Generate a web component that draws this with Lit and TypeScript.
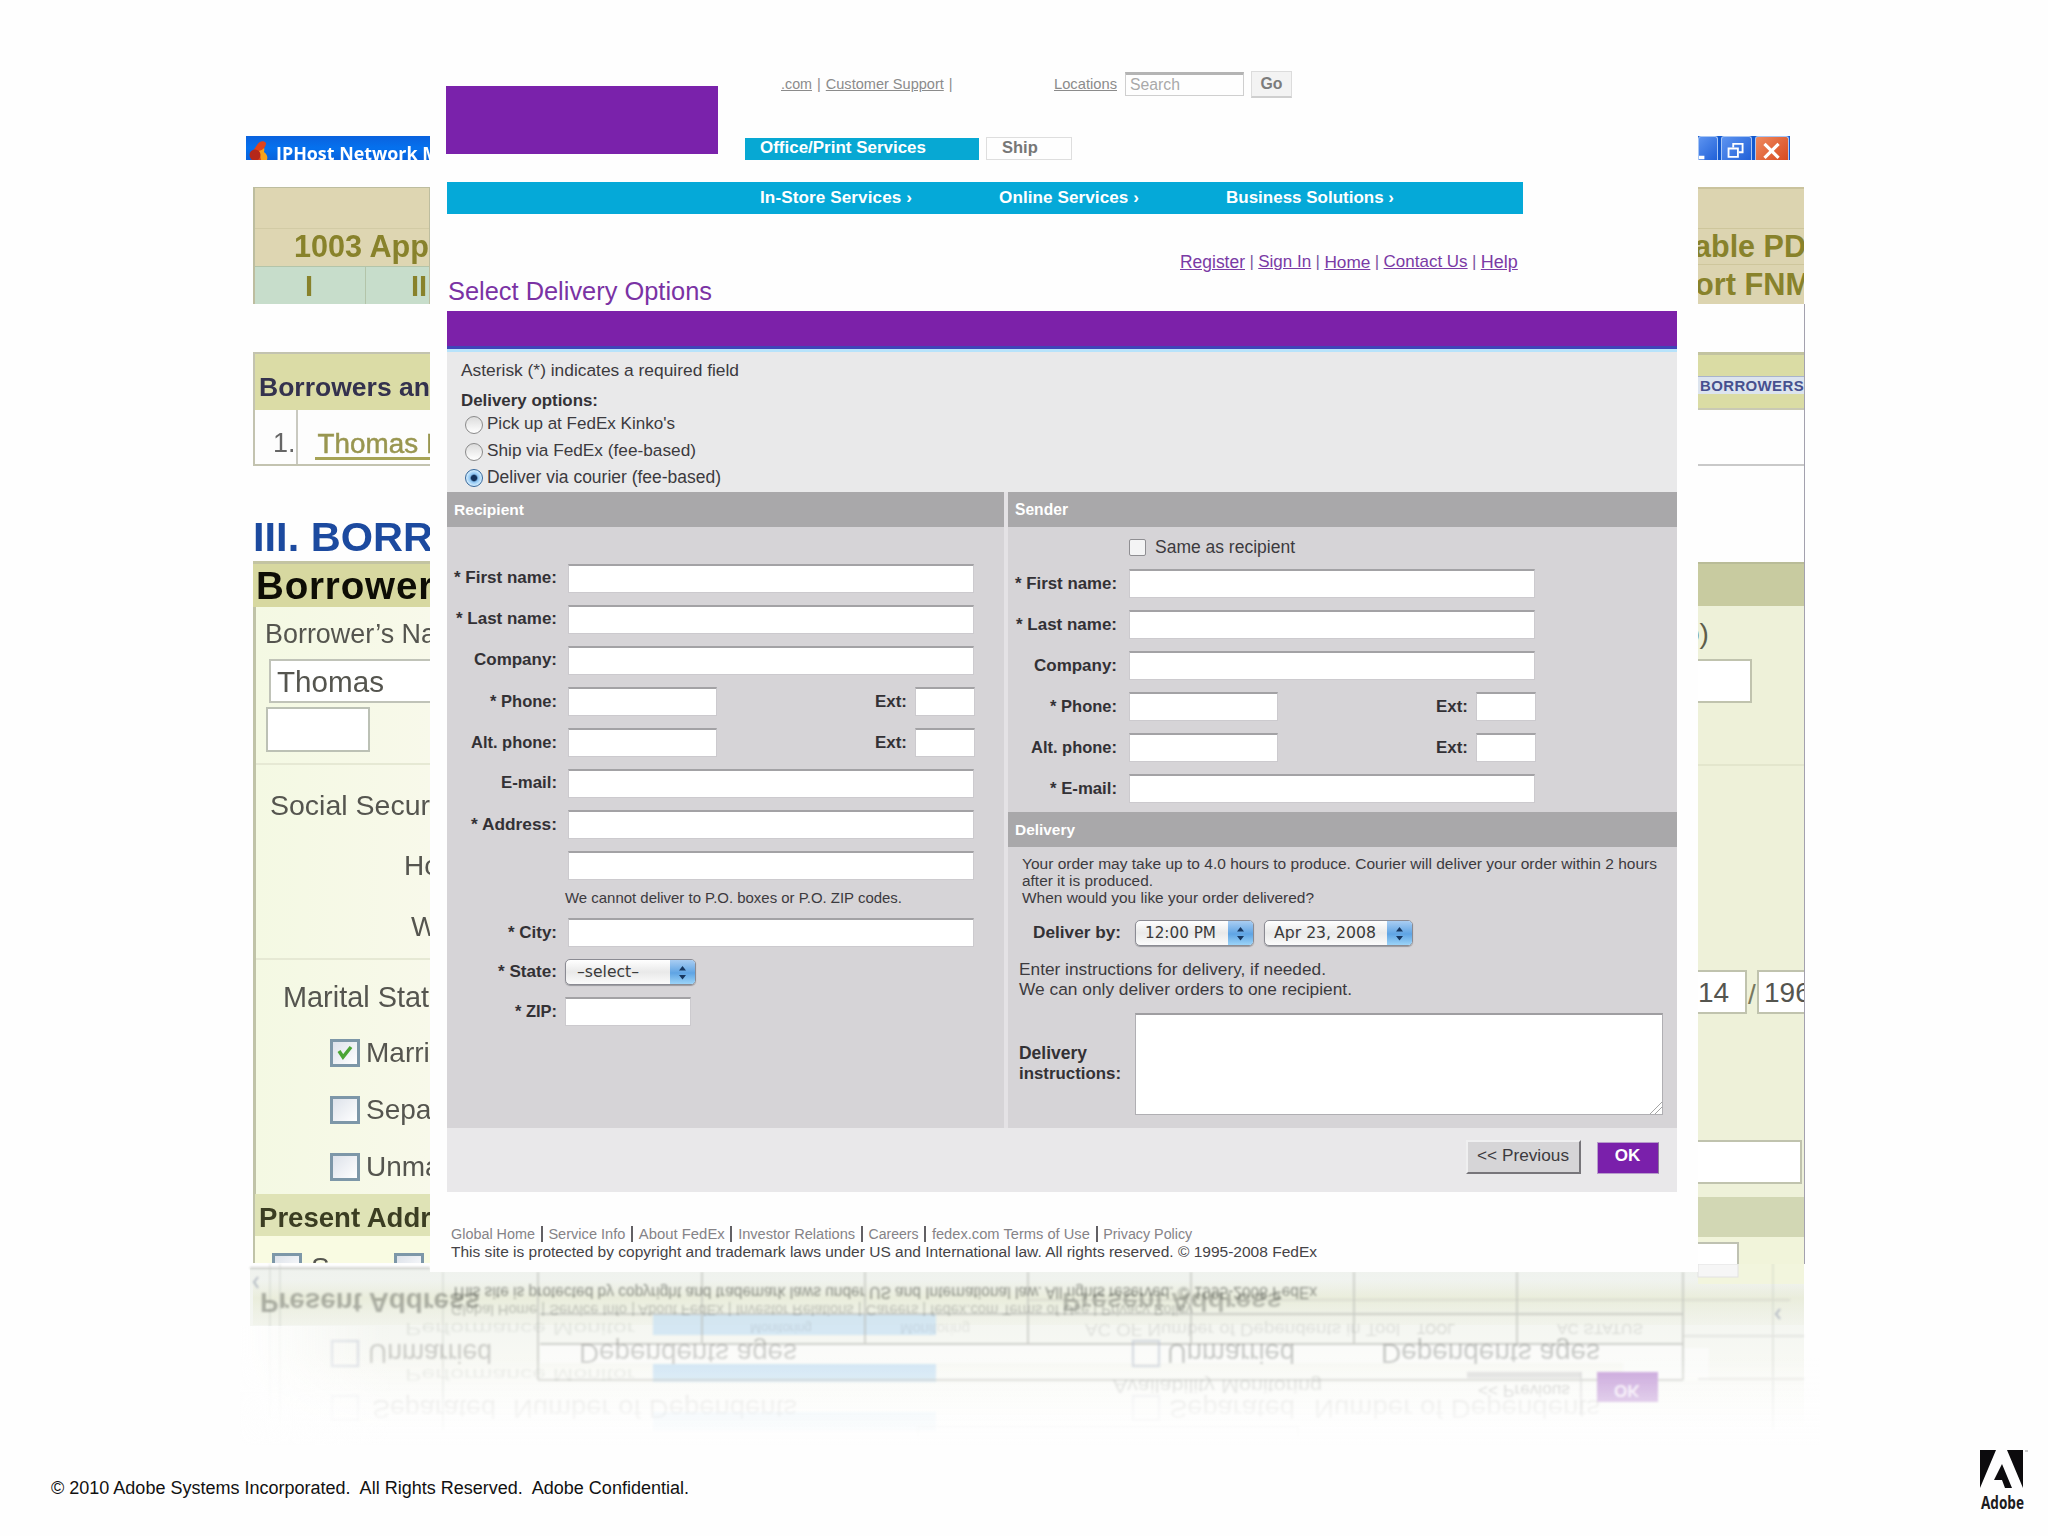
import { LitElement, html, css, svg, nothing } from "lit";
import { customElement, property } from "lit/decorators.js";

/* Text run whose size (within a few percent) and tracking are adjusted so that it spans a given width. */
@customElement("fit-text")
class FitText extends LitElement {
  @property({ type: Number }) w = 0;
  @property() text = "";
  static styles = css`
    :host { display: inline-block; white-space: pre; }
    :host(.u) span { text-decoration: underline; }
  `;
  render() {
    return html`<span>${this.text}</span>`;
  }
  updated() {
    const s = this.renderRoot.querySelector("span") as HTMLElement;
    s.style.letterSpacing = "0";
    const natural = s.getBoundingClientRect().width;
    if (!this.w || !natural) return;
    const base = parseFloat(getComputedStyle(this).fontSize);
    s.style.fontSize = `${base * Math.min(1.07, Math.max(0.94, this.w / natural))}px`;
    const scaled = s.getBoundingClientRect().width;
    s.style.letterSpacing = `${(this.w - scaled) / this.text.length}px`;
  }
}

const fit = (text: string, w: number) => html`<fit-text .text=${text} .w=${w}></fit-text>`;
const link = (text: string, w: number) => html`<fit-text class="u" .text=${text} .w=${w}></fit-text>`;

type Row = { label: string; w: number; kind: "full" | "phone" | "blank" };

const recipientRows: Row[] = [
  { label: "* First name:", w: 103, kind: "full" },
  { label: "* Last name:", w: 101, kind: "full" },
  { label: "Company:", w: 83, kind: "full" },
  { label: "* Phone:", w: 67, kind: "phone" },
  { label: "Alt. phone:", w: 86, kind: "phone" },
  { label: "E-mail:", w: 56, kind: "full" },
  { label: "* Address:", w: 86, kind: "full" },
  { label: "", w: 0, kind: "blank" },
];
const senderRows: Row[] = [
  { label: "* First name:", w: 102, kind: "full" },
  { label: "* Last name:", w: 101, kind: "full" },
  { label: "Company:", w: 83, kind: "full" },
  { label: "* Phone:", w: 67, kind: "phone" },
  { label: "Alt. phone:", w: 86, kind: "phone" },
  { label: "* E-mail:", w: 67, kind: "full" },
];

@customElement("delivery-window")
class DeliveryWindow extends LitElement {
  static styles = css`
    :host { display: block; box-sizing: border-box; background: #fefefe; padding: 0 0 0 16px;
      font: 16.5px "Liberation Sans", Arial, sans-serif; color: #3c3a3e; }
    * { box-sizing: border-box; }
    .head { display: flex; height: 122px; }
    .logo { width: 272px; height: 68px; margin-top: 26px; background: #7a22ab; }
    .tools { margin-left: 27px; flex: 1; }
    .util { display: flex; align-items: center; height: 28px; margin-top: 10px; padding-left: 36px;
      font-size: 14.5px; color: #8b8b8b; }
    .util .links { width: 273px; display: flex; gap: 5px; }
    .search { width: 119px; height: 24px; margin-left: 8px; border: 1px solid #cfcfcf; border-top: 3px solid #b4b4b4;
      padding-left: 4px; line-height: 19px; color: #a9a9a9; font-size: 15px; }
    .go { width: 41px; height: 27px; margin-left: 7px; background: #f3f3f3; border: 1px solid #dcdcdc;
      border-bottom: 2px solid #cfcfcf; text-align: center; line-height: 24px; font-weight: bold; font-size: 16px; color: #7c7c7c; }
    .tabs { display: flex; gap: 6px; height: 23px; margin-top: 39px; font-weight: bold; font-size: 16.5px; line-height: 20px; }
    .tab { height: 22px; width: 234px; margin-top: 1px; padding-left: 15px; background: #07a8d3; color: #fff; line-height: 18px; }
    .tab.off { height: 23px; width: 86px; margin-left: 1px; margin-top: 0; background: #fefefe; border: 1px solid #dedede; color: #777; }
    .nav { display: flex; height: 32px; width: 1076px; margin-left: 1px; background: #05a9d8; color: #fff; font-weight: bold;
      line-height: 32px; padding-left: 313px; font-size: 16px; }
    .nav div { width: 239px; }
    .nav div:nth-child(2) { width: 227px; }
    .quick { display: flex; height: 40px; margin-top: 28px; padding-left: 734px; line-height: 40px; gap: 4.400px; color: #7d55a0; font-size: 17px; }
    .quick .u { color: #7a3aa5; }
    .title { height: 28px; line-height: 30px; margin-top: -6px; padding-left: 2px; font-size: 25px; color: #7a32a4; }
    .bar { height: 38px; margin: 7px 21px 0 1px; background: #7c21a9; border-bottom: 3px solid #3f45b8; }
    .intro { height: 143px; margin: 0 21px 0 1px; background: #e9e9ea; border-top: 3px solid #b7e3fb; padding: 6px 14px 0; }
    .line { height: 24px; line-height: 24px; font-size: 17px; }
    .line.bold { font-weight: bold; margin-top: 8px; height: 20px; line-height: 21px; color: #343236; font-size: 16.5px; }
    .opt { display: flex; align-items: center; height: 26.7px; margin-left: 4px; font-size: 17px; }
    .opt fit-text { margin-top: -2px; }
    .opts { margin-top: 1.500px; }
    .radio { width: 18px; height: 18px; margin-right: 4px; border: 1.5px solid #8a8a8a; border-radius: 50%; background: linear-gradient(#dcdcdc, #fff); }
    .radio.on { border-color: #35679c; background: radial-gradient(circle, #14325c 0 2.6px, #8cc4f2 4px, #d6efff 8px); }
    .cols { display: flex; gap: 4px; margin: 0 21px 0 1px; height: 636px; background: #e4e2e5; }
    .col { background: #d6d4d7; height: 636px; }
    .left { width: 557px; }
    .right { flex: 1; }
    .sub { height: 35px; background: #a9a8aa; color: #fff; font-weight: bold; font-size: 15.5px; line-height: 35px; padding-left: 7px; }
    .field { display: flex; height: 29px; margin-bottom: 12px; align-items: center; color: #333135; font-weight: bold; }
    .field.state { height: 26px; }
    .lab { width: 110px; margin-right: 11px; text-align: right; flex: none; }
    .leftform .lab { margin-top: -1px; }
    .right .lab { width: 109px; margin-right: 12px; }
    .in { height: 29px; width: 406px; background: #fff; border: 1px solid #cccace; border-top: 2px solid #a3a2a5; flex: none; }
    .in.ph { width: 149px; }
    .in.ex { width: 60px; }
    .ext { width: 198px; padding-right: 8px; text-align: right; }
    .note { height: 39px; line-height: 38px; padding-left: 118px; font-size: 14.5px; margin-top: -12px; }
    .leftform { padding-top: 37px; height: 364px; }
    .sel { display: flex; height: 26px; border: 1px solid #8b8b93; border-radius: 5px; overflow: hidden; font: 15.5px "DejaVu Sans", "Noto Sans", sans-serif; color: #3a3a3a;
      background: linear-gradient(#fff, #e9e9e9 50%, #fbfbfb); line-height: 24px; box-shadow: 0 1px 1px #9a9a9e; font-weight: normal; padding-left: 11px; justify-content: space-between; }
    .sel svg { width: 25px; height: 26px; background: linear-gradient(#a9cdf2, #5fa4e4 50%, #a6dcfb); flex: none; }
    .s1 { width: 131px; margin-left: -3px; } .s2 { width: 119px; } .s3 { width: 149px; margin-left: 10px; }
    .s2, .s3 { padding-left: 9px; }
    .in.zip { width: 126px; margin-left: -3px; }
    .same { display: flex; height: 41px; margin-bottom: 1px; align-items: center; padding-left: 121px; font-size: 17px; gap: 9px; }
    .cb { width: 17px; height: 17px; border: 1.5px solid #8f8e92; border-radius: 2px; background: #f4f4f5; }
    .sform { height: 243px; }
    .para { font-size: 15.5px; line-height: 17px; padding: 8px 0 0 14px; height: 73px; }
    .para div, .para2 div { white-space: nowrap; }
    .by { display: flex; height: 25px; align-items: center; padding-left: 25px; font-weight: bold; }
    .by > fit-text { width: 102px; color: #333135; }
    .para2 { font-size: 17px; line-height: 19.5px; padding: 15px 0 0 11px; height: 68px; }
    .ins { display: flex; align-items: center; padding-left: 11px; font-weight: bold; line-height: 20px; color: #333135; }
    .ins .l { width: 116px; margin-top: -2px; }
    .ta { width: 528px; height: 102px; background: #fff; border: 1px solid #b0afb3; border-top: 2px solid #9f9ea1; display: flex; align-items: flex-end; justify-content: flex-end; }
    .foot { height: 64px; margin: 0 21px 0 1px; background: #e9e8ea; display: flex; justify-content: flex-end; padding: 12px 18.500px 0 0; gap: 16px; }
    .btn { width: 115px; height: 34px; background: #d6d5d7; border: 2px solid #efeff0; border-right-color: #77757a; border-bottom-color: #77757a; text-align: center; line-height: 27px; font-size: 17px; }
    .ok { width: 62px; height: 32px; margin-top: 2px; background: #7a20ab; color: #fff; border: 1px solid #b79ccb; border-right-color: #8b7a9a; text-align: center; line-height: 25px; font-weight: bold; font-size: 17px; }
    .legal { padding: 33px 0 0 5px; font-size: 14.5px; line-height: 18px; color: #858387; white-space: nowrap; }
    .legal .l1 { display: flex; gap: 5.700px; }
    .legal i { width: 2px; height: 16px; margin-top: 1px; background: #626064; }
    .legal .l2 { color: #454346; font-size: 15.5px; }
  `;

  row(r: Row) {
    return html`<div class="field">
      <div class="lab">${r.label ? fit(r.label, r.w) : nothing}</div>
      ${r.kind === "phone"
        ? html`<div class="in ph"></div><div class="ext">${fit("Ext:", 32)}</div><div class="in ex"></div>`
        : html`<div class="in"></div>`}
    </div>`;
  }
  arrows() {
    return html`<svg viewBox="0 0 25 26"><path d="M12.5 6l3.5 4.500h-7zM12.500 19.500l3.500-4.500h-7z" fill="#17365f" /></svg>`;
  }
  render() {
    const legal: [string, number][] = [["Global Home", 84], ["Service Info", 77], ["About FedEx", 86], ["Investor Relations", 117], ["Careers", 50], ["fedex.com Terms of Use", 158], ["Privacy Policy", 89]];
    const quick: [string, number][] = [["Register", 65], ["Sign In", 53], ["Home", 46], ["Contact Us", 84], ["Help", 37]];
    return html`
      <div class="head">
        <div class="logo"></div>
        <div class="tools">
          <div class="util">
            <div class="links">${link(".com", 31)}<span>|</span>${link("Customer Support", 118)}<span>|</span></div>
            ${link("Locations", 63)}
            <div class="search">${fit("Search", 50)}</div>
            <div class="go">${fit("Go", 22)}</div>
          </div>
          <div class="tabs">
            <div class="tab">${fit("Office/Print Services", 166)}</div>
            <div class="tab off">Ship</div>
          </div>
        </div>
      </div>
      <div class="nav">
        <div>${fit("In-Store Services ›", 152)}</div>
        <div>${fit("Online Services ›", 140)}</div>
        <div>${fit("Business Solutions ›", 168)}</div>
      </div>
      <div class="quick">${quick.map(([t, w], i) => html`${i ? html`<span>|</span>` : nothing}${link(t, w)}`)}</div>
      <div class="title">${fit("Select Delivery Options", 264)}</div>
      <div class="bar"></div>
      <div class="intro">
        <div class="line">${fit("Asterisk (*) indicates a required field", 278)}</div>
        <div class="line bold">${fit("Delivery options:", 137)}</div>
        <div class="opts">
          <div class="opt"><span class="radio"></span>${fit("Pick up at FedEx Kinko's", 188)}</div>
          <div class="opt"><span class="radio"></span>${fit("Ship via FedEx (fee-based)", 209)}</div>
          <div class="opt"><span class="radio on"></span>${fit("Deliver via courier (fee-based)", 234)}</div>
        </div>
      </div>
      <div class="cols">
        <div class="col left">
          <div class="sub">${fit("Recipient", 70)}</div>
          <div class="leftform">${recipientRows.map((r) => this.row(r))}</div>
          <div class="note">${fit("We cannot deliver to P.O. boxes or P.O. ZIP codes.", 337)}</div>
          <div class="field"><div class="lab">${fit("* City:", 49)}</div><div class="in"></div></div>
          <div class="field state"><div class="lab">${fit("* State:", 59)}</div><div class="sel s1">${fit("–select–", 62)}${this.arrows()}</div></div>
          <div class="field"><div class="lab">${fit("* ZIP:", 42)}</div><div class="in zip"></div></div>
        </div>
        <div class="col right">
          <div class="sub">${fit("Sender", 53)}</div>
          <div class="same"><span class="cb"></span>${fit("Same as recipient", 140)}</div>
          <div class="sform">${senderRows.map((r) => this.row(r))}</div>
          <div class="sub">${fit("Delivery", 60)}</div>
          <div class="para">
            <div>${fit("Your order may take up to 4.0 hours to produce. Courier will deliver your order within 2 hours", 635)}</div>
            <div>${fit("after it is produced.", 131)}</div>
            <div>${fit("When would you like your order delivered?", 292)}</div>
          </div>
          <div class="by">${fit("Deliver by:", 88)}<div class="sel s2">${fit("12:00 PM", 71)}${this.arrows()}</div><div class="sel s3">${fit("Apr 23, 2008", 102)}${this.arrows()}</div></div>
          <div class="para2">
            <div>${fit("Enter instructions for delivery, if needed.", 307)}</div>
            <div>${fit("We can only deliver orders to one recipient.", 333)}</div>
          </div>
          <div class="ins">
            <div class="l">${fit("Delivery", 68)}<br />${fit("instructions:", 102)}</div>
            <div class="ta"><svg width="13" height="13" viewBox="0 0 13 13" stroke="#a5a5a5" fill="none"><path d="M1 13L13 1M6 13L13 6" /></svg></div>
          </div>
        </div>
      </div>
      <div class="foot"><div class="btn">${fit("<< Previous", 92)}</div><div class="ok">OK</div></div>
      <div class="legal">
        <div class="l1">${legal.map(([t, w], i) => html`${i ? html`<i></i>` : nothing}${fit(t, w)}`)}</div>
        <div class="l2">${fit("This site is protected by copyright and trademark laws under US and International law. All rights reserved. © 1995-2008 FedEx", 866)}</div>
      </div>
    `;
  }
}

const paneBase = css`
  :host { display: block; overflow: hidden; font: 28px "Liberation Sans", Arial, sans-serif; color: #55554f; white-space: nowrap; }
  * { box-sizing: border-box; }
`;

@customElement("loan-pane-left")
class LoanPaneLeft extends LitElement {
  static styles = [paneBase, css`
    .tb { display: flex; height: 24px; background: linear-gradient(#0a62de, #0571ee 50%, #0762dd); color: #fff; overflow: hidden;
      font: bold 18px "Open Sans", "Noto Sans", sans-serif; line-height: 34px; gap: 7px; padding-left: 1px; }
    .tb svg { width: 22px; height: 24px; flex: none; }
    .body { margin-left: 7px; }
    .t1 { height: 117px; margin-top: 27px; border: 1px solid #bdbd9f; border-left-width: 2px; background: #ded6b2; font-weight: bold; color: #88822b; font-size: 29px; }
    .e { height: 41px; border-bottom: 1px solid #d2cba5; }
    .h { height: 37px; line-height: 34px; padding-left: 39px; }
    .g { display: flex; height: 38px; line-height: 38px; background: #c7ddcb; border-top: 1px solid #b3c4a9; }
    .g div:first-child { width: 111px; border-right: 1px solid #b3c4a9; padding-left: 50px; }
    .g div + div { padding-left: 45px; }
    .t2 { height: 114px; margin-top: 48px; border: 2px solid #c3c3b0; border-right: 0; background: #fdfdfd; }
    .bh { height: 56px; line-height: 67px; background: #dbdca6; font-weight: bold; font-size: 25px; color: #34324e; padding-left: 4px; }
    .br { display: flex; height: 54px; line-height: 67px; font-size: 27px; color: #666; }
    .br .n { width: 48px; padding-left: 18px; border-right: 2px solid #c9c9c0; }
    .br .a { height: 50px; margin-left: 17px; border-bottom: 3px solid #a6a356; color: #999650; -webkit-text-stroke: .5px #999650; font-size: 26px; flex: none; padding-left: 3px; }
    .iii { height: 95px; line-height: 141px; font-size: 43px; font-weight: bold; color: #1c4a9f; overflow: hidden; }
    .bw { height: 46px; line-height: 44px; background: #d7d8a0; border-top: 3px solid #c3c4a2; font-size: 36px; font-weight: bold; color: #0e0d05; padding-left: 3px; }
    .p { height: 587px; border-left: 3px solid #c0c3a8; background: linear-gradient(90deg, #f4f9e3, #f8f9ea); }
    .l { height: 40px; line-height: 41px; }
    .bn { height: 52px; line-height: 53px; padding-left: 9px; }
    .x { height: 44px; border: 2px solid #c0c3b8; background: #fff; line-height: 42px; margin-left: 13px; padding-left: 6px; border-right: 0; }
    .x2 { width: 104px; height: 45px; border: 2px solid #bcc1b5; background: #fff; margin: 4px 0 11px 10px; }
    .r { border-top: 2px solid #e6e9d4; }
    .so { height: 82px; line-height: 80px; padding-left: 14px; }
    .ho { padding-left: 148px; }
    .w { padding-left: 155px; margin: 21px 0 12px; }
    .ma { padding-left: 27px; margin: 17px 0 7px; }
    .c { display: flex; height: 57px; align-items: center; padding-left: 74px; gap: 6px; }
    .k { width: 30px; height: 28px; border: 3px solid #7d97a8; background: linear-gradient(135deg, #dde2ea, #fff); flex: none; display: flex; }
    .pr { height: 42px; line-height: 47px; background: #dfe3b6; color: #3b3d22; font-weight: bold; padding-left: 4px; border-left: 2px solid #c0c3a8; }
    .z { display: flex; height: 27px; background: #f9fbe2; padding: 17px 0 0 17px; border-left: 2px solid #c0c3a8; overflow: hidden; }
    .z .s { height: 10px; width: 92px; padding-left: 9px; line-height: 29px; overflow: hidden; }
  `];
  render() {
    const box = (on = false) => html`<span class="k">${on ? html`<svg viewBox="0 0 24 22"><path d="M6 9l4 6 8-10" fill="none" stroke="#4ba535" stroke-width="3.500" /></svg>` : nothing}</span>`;
    return html`
      <div class="tb"><svg viewBox="0 0 22 24"><path d="M13 8c4 0 5 5 4 8 3 2 4 5 3 8h-7l-2-10z" fill="#f6a21b" /><path d="M10 9c2-4 7-5 9-2 0 4-3 7-7 8l2 9H5l1-9z" fill="#e0431b" /><circle cx="8" cy="19" r="5.500" fill="#b5281a" /></svg>${fit("IPHost Network M", 163)}</div>
      <div class="body">
        <div class="t1"><div class="e"></div><div class="h">${fit("1003 App", 135)}</div><div class="g"><div>I</div><div>II</div></div></div>
        <div class="t2"><div class="bh">${fit("Borrowers an", 171)}</div><div class="br"><div class="n">1.</div><div class="a">${fit("Thomas L", 124)}</div></div></div>
        <div class="iii">${fit("III. BORR", 180)}</div>
        <div class="bw">${fit("Borrower", 178)}</div>
        <div class="p">
          <div class="bn">${fit("Borrower’s Na", 171)}</div>
          <div class="x">${fit("Thomas", 107)}</div>
          <div class="x2"></div>
          <div class="r so">${fit("Social Secur", 160)}</div>
          <div class="l ho">Ho</div>
          <div class="l w">W</div>
          <div class="r"></div>
          <div class="l ma">${fit("Marital Stat", 146)}</div>
          <div class="c">${box(true)}Marri</div>
          <div class="c">${box()}Sepa</div>
          <div class="c">${box()}Unma</div>
        </div>
        <div class="pr">${fit("Present Addr", 172)}</div>
        <div class="z">${box()}<span class="s">S</span>${box()}</div>
      </div>`;
  }
}

@customElement("loan-pane-right")
class LoanPaneRight extends LitElement {
  static styles = [paneBase, css`
    .tb { display: flex; height: 24px; width: 92px; background: #1258cf; overflow: hidden; gap: 3px; }
    .tb svg { height: 24px; display: block; border: 1px solid #a8c6f4; border-bottom: 0; border-radius: 3px 3px 0 0; background: linear-gradient(135deg, #5c93f0, #2161d8); box-sizing: border-box; }
    .tb .cl { background: linear-gradient(135deg, #ee8a60, #d84a1f); }
    .t { margin-top: 27px; width: 106px; height: 117px; background: #dcd4b0; border-top: 2px solid #cac39d; font-weight: bold; font-size: 29px; color: #88822b; overflow: hidden; }
    .e { height: 39px; }
    .a { height: 36px; line-height: 35px; border-top: 1px solid #cec69c; margin-left: -4px; }
    .o { height: 40px; line-height: 39px; border-top: 1px solid #cec69c; margin-left: -3px; }
    .frame { border-right: 1px solid #a3a1ae; height: 960px; background: #fefefe; width: 107px; }
    .gap { height: 48px; }
    .bh { height: 58px; background: #dadca4; border-top: 3px solid #c2c3a0; border-bottom: 2px solid #c9c9b4; padding-top: 21px; overflow: hidden; }
    .bo { height: 18px; background: #dce4ee; border-top: 1px solid #a9b4cc; font-size: 14px; line-height: 18px; color: #46508f; font-weight: bold; padding-left: 2px; }
    .w1 { height: 56px; border-bottom: 2px solid #c9c9c9; }
    .w2 { height: 96px; }
    .hd { height: 44px; background: #c8cba0; border-top: 2px solid #b9bc98; }
    .p { height: 591px; background: #eef1d9; }
    .n { height: 53px; line-height: 56px; color: #5e5e4c; margin-left: -14px; }
    .b { background: #fff; border: 2px solid #c0c3ae; border-left: 0; }
    .b1 { width: 54px; height: 44px; }
    .ln { margin-top: 61px; border-top: 2px solid #e3e6cd; height: 206px; }
    .d { display: flex; height: 44px; line-height: 42px; }
    .d .b { width: 49px; }
    .d i { width: 10px; font-style: normal; padding-left: 1px; color: #77785f; line-height: 49px; }
    .d .c { flex: 1; border: 2px solid #c0c3ae; border-right: 0; background: #fff; padding-left: 5px; overflow: hidden; }
    .b2 { width: 104px; height: 44px; margin-top: 126px; }
    .h2 { height: 40px; background: #d2d7b4; }
    .l { height: 28px; background: #f1f4da; padding-top: 5px; }
    .l .b { width: 41px; height: 30px; border-color: #bfc2b2; }
  `];
  render() {
    return html`
      <div class="tb">
        <svg width="20" viewBox="0 0 20 24"><path d="M0 22h6" stroke="#fff" stroke-width="4" /></svg>
        <svg width="31" viewBox="0 0 31 24" fill="none" stroke="#fff" stroke-width="2"><path d="M12 11V7h10v9h-4" /><path d="M7 12h10v9H7z" /></svg>
        <svg class="cl" width="34" viewBox="0 0 34 24"><path d="M9 7l15 15M24 7L9 22" stroke="#fff" stroke-width="3.4" /></svg>
      </div>
      <div class="t"><div class="e"></div><div class="a">${fit("able PD", 112)}</div><div class="o">${fit("ort FNM", 116)}</div></div>
      <div class="frame">
        <div class="gap"></div>
        <div class="bh"><div class="bo">${fit("BORROWERS", 104)}</div></div>
        <div class="w1"></div><div class="w2"></div>
        <div class="hd"></div>
        <div class="p">
          <div class="n">o)</div>
          <div class="b b1"></div>
          <div class="ln"></div>
          <div class="d"><div class="b">14</div><i>/</i><div class="c">196</div></div>
          <div class="b b2"></div>
        </div>
        <div class="h2"></div>
        <div class="l"><div class="b"></div></div>
      </div>`;
  }
}

type Ghost = { t: string; x: number; y: number; w: number; s: number; o: number; b?: boolean };
const ghosts: Ghost[] = [
  { t: "Present Address", x: 260, y: 1293, w: 220, s: 27, o: 0.34, b: true },
  { t: "Present Address", x: 1062, y: 1293, w: 220, s: 25, o: 0.28, b: true },
  { t: "This site is protected by copyright and trademark laws under US and International law. All rights reserved. © 1995-2008 FedEx", x: 451, y: 1287, w: 866, s: 16, o: 0.5 },
  { t: "Global Home | Service Info | About FedEx | Investor Relations | Careers | fedex.com Terms of Use | Privacy Policy", x: 451, y: 1305, w: 742, s: 14.5, o: 0.26 },
  { t: "Unmarried", x: 368, y: 1344, w: 124, s: 27, o: 0.22 },
  { t: "Dependents ages", x: 579, y: 1344, w: 218, s: 27, o: 0.22 },
  { t: "Unmarried", x: 1167, y: 1344, w: 128, s: 27, o: 0.25 },
  { t: "Dependents ages", x: 1381, y: 1344, w: 219, s: 27, o: 0.25 },
  { t: "Separated", x: 372, y: 1400, w: 124, s: 26, o: 0.13 },
  { t: "Number of Dependents", x: 513, y: 1400, w: 284, s: 26, o: 0.13 },
  { t: "Separated", x: 1169, y: 1400, w: 126, s: 26, o: 0.13 },
  { t: "Number of Dependents", x: 1314, y: 1400, w: 286, s: 26, o: 0.13 },
  { t: "Availability Monitoring", x: 1113, y: 1380, w: 209, s: 18, o: 0.17 },
  { t: "<< Previous", x: 1478, y: 1385, w: 92, s: 17, o: 0.24 },
  { t: "Performance Monitor", x: 405, y: 1323, w: 230, s: 16, o: 0.08 },
  { t: "Monitoring", x: 750, y: 1324, w: 62, s: 13, o: 0.11 },
  { t: "Monitoring", x: 900, y: 1324, w: 70, s: 14, o: 0.09 },
  { t: "AC OF Number of Dependents in Tool", x: 1085, y: 1324, w: 315, s: 16, o: 0.11 },
  { t: "TOOL", x: 1417, y: 1324, w: 38, s: 14, o: 0.15 },
  { t: "AC STATUS", x: 1557, y: 1324, w: 86, s: 14, o: 0.13 },
  { t: "Performance Monitor", x: 405, y: 1369, w: 230, s: 16, o: 0.08 },
];

@customElement("app-root")
class AppRoot extends LitElement {
  static styles = css`
    :host { display: block; position: relative; width: 2048px; height: 1536px; overflow: hidden; background: #fefefe;
      font-family: "Liberation Sans", Arial, sans-serif; }
    .win { position: absolute; }
    .lp { left: 246px; top: 136px; width: 184px; height: 1128px; }
    .rp { left: 1698px; top: 136px; width: 107px; height: 1128px; }
    .front { left: 430px; top: 60px; width: 1268px; height: 1212px; }
    .mirror { position: absolute; left: 240px; top: 1260px; width: 1580px; height: 210px; }
    .soft { filter: blur(0.9px); }
    .copy { position: absolute; left: 51px; top: 1476px; font-size: 18px; line-height: 24px; color: #111; }
    .brand { position: absolute; left: 1976px; top: 1446px; width: 56px; height: 70px; }
  `;
  render() {
    return html`
      <svg class="mirror" viewBox="240 1260 1580 210" font-family="Liberation Sans, Arial, sans-serif">
        <defs>
          <linearGradient id="g" x1="0" y1="0" x2="0" y2="1"><stop offset="0" stop-color="#eff2ee" /><stop offset=".55" stop-color="#f8f9f4" /><stop offset="1" stop-color="#fefefe" /></linearGradient>
          <linearGradient id="k" x1="0" y1="0" x2="0" y2="1"><stop offset="0" stop-color="#fefefe" stop-opacity="0" /><stop offset="1" stop-color="#fefefe" /></linearGradient>
          <linearGradient id="e" x1="0" y1="0" x2="1" y2="0"><stop offset="0" stop-color="#fefefe" /><stop offset="1" stop-color="#fefefe" stop-opacity="0" /></linearGradient>
          <linearGradient id="b" x1="0" y1="0" x2="0" y2="1"><stop offset="0" stop-color="#e3e7cb" stop-opacity="0" /><stop offset=".4" stop-color="#e3e7cb" /><stop offset="1" stop-color="#e8ebd8" stop-opacity=".4" /></linearGradient>
        </defs>
        <rect x="250" y="1268" width="1554" height="176" fill="url(#g)" />
        <rect x="253" y="1280" width="1551" height="45" fill="url(#b)" opacity=".55" />
        <rect x="1698" y="1264" width="106" height="20" fill="#f2f5dd" />
        <rect x="1698" y="1264" width="40" height="13" fill="#f6f6f6" stroke="#e2e2e2" />
        <g class="soft">
          <g fill="#c9e2f3"><rect x="653" y="1314" width="283" height="21" opacity=".75" /><rect x="653" y="1364" width="283" height="18" opacity=".85" /><rect x="653" y="1412" width="283" height="19" opacity=".4" /></g>
          <g fill="#fefefe" opacity=".6"><rect x="540" y="1345" width="1143" height="18" /><rect x="1623" y="1348" width="86" height="32" /></g>
          <g stroke="#b6b8b2" stroke-width="1.800" opacity=".6" fill="none">
            <path d="M540 1314H1683M540 1344H1683M538 1380H1683M538 1272V1380M702 1272V1344M865 1272V1344M1028 1272V1344M1191 1272V1344M1354 1272V1344M1517 1272V1344M1683 1272V1380" />
            <path d="M443 1272V1430M270 1264V1440M280 1264V1430M1028 1300H1790M1683 1336H1804M1773 1262V1430M1698 1379H1804" opacity=".45" />
            <path d="M250 1268H430" />
            <path d="M918 1470V1427H1298V1450" opacity=".3" />
          </g>
          <g fill="none" stroke="#bcc3cf" stroke-width="2.4" opacity=".55"><rect x="332" y="1341" width="26" height="25" /><rect x="1133" y="1341" width="26" height="25" /><rect x="332" y="1396" width="26" height="24" opacity=".4" /><rect x="1133" y="1396" width="26" height="24" opacity=".4" /></g>
          <rect x="1467" y="1372" width="114" height="6" fill="#ccc" opacity=".6" /><path d="M1581 1372V1415" stroke="#ccc" stroke-width="2" opacity=".6" />
          <rect x="1597" y="1372" width="61" height="30" fill="#c39bd7" />
          <text transform="translate(1614 1385) scale(1 -1)" font-size="17" font-weight="bold" fill="#f4eaf8">OK</text>
          ${ghosts.map((g) => svg`<text transform="translate(${g.x} ${g.y}) scale(1 -1)" textLength=${g.w} lengthAdjust="spacingAndGlyphs" font-size=${g.s} font-weight=${g.b ? "bold" : "normal"} fill="#2c2f2a" fill-opacity=${g.o}>${g.t}</text>`)}
          <path d="M258 1277l-4 5 4 6M1780 1309l-4 5 4 5" fill="none" stroke="#b5bcc4" stroke-width="2" />
        </g>
        <rect x="240" y="1355" width="1580" height="90" fill="url(#k)" />
        <rect x="240" y="1445" width="1580" height="30" fill="#fefefe" />
        <rect x="240" y="1326" width="150" height="130" fill="url(#e)" />
      </svg>
      <loan-pane-left class="win lp"></loan-pane-left>
      <loan-pane-right class="win rp"></loan-pane-right>
      <delivery-window class="win front"></delivery-window>
      <div class="copy">${fit("© 2010 Adobe Systems Incorporated.  All Rights Reserved.  Adobe Confidential.", 638)}</div>
      <svg class="brand" viewBox="1976 1446 56 70">
        <path d="M1980 1450h16l-16 38zM2007 1450h16v38zM2002 1464l10 24h-7l-3-8h-8z" fill="#0c0b0d" />
        <path d="M2025 1451h3" stroke="#999" />
        <text x="1981" y="1509" font-size="17" font-weight="bold" font-family="Open Sans, Noto Sans, sans-serif" textLength="43" lengthAdjust="spacingAndGlyphs" fill="#1c1b1d">Adobe</text>
      </svg>`;
  }
}
